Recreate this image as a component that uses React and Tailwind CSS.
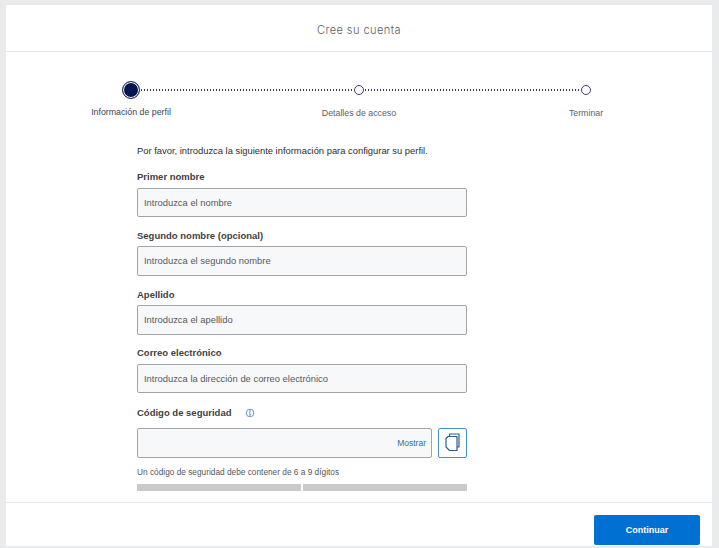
import React from "react";

function Field({ label, placeholder }) {
  return (
    <div className="flex flex-col">
      <label className="text-[9.5px] leading-[12px] font-bold text-[#3f4143] mb-[4.5px]">{label}</label>
      <div className="h-[29.67px] rounded-[2px] border border-[#a2a4a6] bg-[#f7f8fa] px-[6px] flex items-center text-[9.4px] text-[#55585c]">
        {placeholder}
      </div>
    </div>
  );
}

function Line({ className = "flex-1" }) {
  return <div className={className + " h-[1.5px] bg-[repeating-linear-gradient(90deg,#3a4068_0,#3a4068_1px,transparent_1px,transparent_3px)]"} />;
}

function Small() {
  return <div className="w-[10px] h-[10px] rounded-full border-[1.5px] border-[#3a4068] bg-white shrink-0" />;
}

export default function App() {
  return (
    <div className="w-[719px] h-[548px] bg-[#e9ebed] pt-[5px] pl-[6px] overflow-hidden" style={{ fontFamily: '"Liberation Sans", Arial, sans-serif' }}>
      <div className="w-[706px] h-[541px] bg-white flex flex-col">
        <header className="h-[47px] shrink-0 border-b border-[#e6e8ea] flex items-center justify-center pt-[4px] text-[11px] tracking-[0.45px] text-[#5a5d60]" style={{ fontFamily: '"Inter", "Liberation Sans", sans-serif', fontWeight: 300 }}>
          Cree su cuenta
        </header>

        <main className="flex-1 min-h-0 overflow-hidden flex flex-col">
          <div className="pl-[116px] pr-[121px] pt-[29px] flex items-center gap-[1px]">
            <div className="w-[18px] h-[18px] rounded-full bg-[#04144f] border-[1.5px] border-[#2e3463] shrink-0 shadow-[inset_0_0_0_1px_#ffffff]" />
            <Line className="w-[212px] shrink-0" />
            <Small />
            <Line />
            <Small />
          </div>
          <div className="flex text-[8.8px] leading-[11px] mt-[8px] pl-[85px] text-[#5d6169]">
            <span className="w-[80px] text-center text-[#3d4358] whitespace-nowrap">Información de perfil</span>
            <span className="w-[90px] text-center ml-[143px] mt-[1px]">Detalles de acceso</span>
            <span className="w-[60px] text-center ml-[152px] mt-[1px]">Terminar</span>
          </div>

          <div className="w-[330px] ml-[131px] mt-[26px] flex flex-col">
            <p className="text-[9.4px] leading-[12px] text-[#2c2e2f] mb-[14.3px]">
              Por favor, introduzca la siguiente información para configurar su perfil.
            </p>
            <div className="flex flex-col gap-[12.5px]">
              <Field label="Primer nombre" placeholder="Introduzca el nombre" />
              <Field label="Segundo nombre (opcional)" placeholder="Introduzca el segundo nombre" />
              <Field label="Apellido" placeholder="Introduzca el apellido" />
              <Field label="Correo electrónico" placeholder="Introduzca la dirección de correo electrónico" />
            </div>
            <div className="flex items-center mt-[13.5px] mb-[9px] h-[12px]">
              <span className="text-[9.5px] leading-[12px] font-bold text-[#3f4143]">Código de seguridad</span>
              <svg className="ml-[14px]" width="10" height="10" viewBox="0 0 10 10" fill="none" stroke="#3c7fc4" strokeWidth="0.8">
                <circle cx="5" cy="5" r="3.8" />
                <path d="M5 4.4v2.6M4.2 7.1h1.6M4.4 4.4h.6" />
                <circle cx="5" cy="3" r="0.35" fill="#3c7fc4" />
              </svg>
            </div>
            <div className="flex gap-[6px]">
              <div className="w-[295px] h-[30px] rounded-[2px] border border-[#a2a4a6] bg-[#f7f8fa] flex items-center justify-end pr-[5px] text-[8.5px] text-[#2f6db5]">
                Mostrar
              </div>
              <button className="w-[29px] h-[30px] rounded-[2px] border border-[#4a90d0] bg-white flex items-center justify-center">
                <svg width="15" height="19" viewBox="0 0 15 19" fill="none" stroke="#2c5f8f" strokeWidth="1.2" strokeLinejoin="round">
                  <path d="M4.5 3V1h9.5v13h-2" />
                  <path d="M1 5.5 3 3.5h9v14H4.5L1 14z" fill="white" />
                </svg>
              </button>
            </div>
            <p className="text-[8.3px] leading-[11px] text-[#55585c] mt-[9px]">Un código de seguridad debe contener de 6 a 9 dígitos</p>
            <div className="flex gap-[2px] mt-[6px]">
              <div className="flex-1 h-[7px] bg-[#c9cacb]" />
              <div className="flex-1 h-[7px] bg-[#c9cacb]" />
            </div>
          </div>
        </main>

        <footer className="h-[44px] shrink-0 border-t border-[#e6e8ea] flex items-start justify-end pr-[12px] pt-[12px]">
          <button className="w-[106px] h-[30px] rounded-[2px] bg-[#0070d2] pt-[1px] text-white text-[9px] font-bold flex items-center justify-center">
            Continuar
          </button>
        </footer>
      </div>
    </div>
  );
}
